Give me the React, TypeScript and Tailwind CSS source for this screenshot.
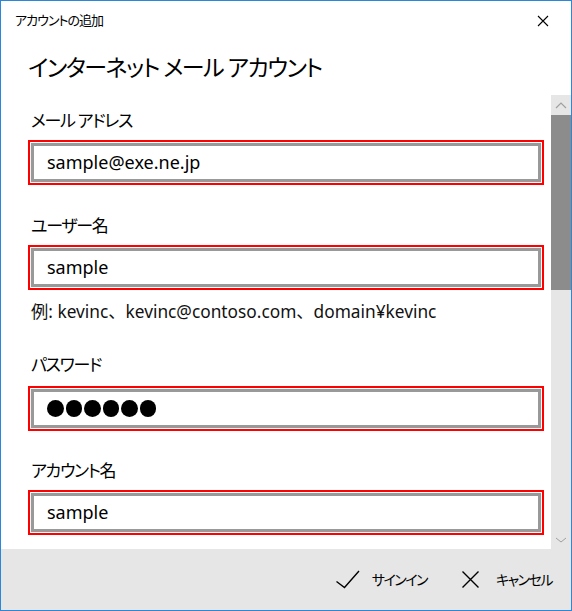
import React from "react";

const Field = ({ children }: { children: React.ReactNode }) => {
  return (
    <div className="h-[45px] border-2 border-[#ff0000] p-px">
      <div className="h-full border-[3px] border-[#999999] bg-white flex items-center pl-[13px] text-[18px] text-black">
        {children}
      </div>
    </div>
  );
};

const Label = ({ children, className }: { children: React.ReactNode; className?: string }) => {
  return (
    <div className={"h-[24px] leading-[24px] pl-[3px] text-[17px] tracking-[-1.3px] text-black " + (className || "")}>
      {children}
    </div>
  );
};

const Dot = () => <span className="w-[16.5px] h-[16.5px] rounded-full bg-black" />;

const App = () => {
  return (
    <div className="w-[572px] h-[611px] border border-[#2b88d8] bg-white flex flex-col font-['Noto_Sans','Noto_Sans_CJK_JP',sans-serif] [font-feature-settings:'palt'] overflow-hidden">
      {/* title bar */}
      <div className="h-[39px] flex items-center justify-between pl-[14px] pr-[22px] shrink-0">
        <span className="text-[13px] tracking-[-1px] text-black">アカウントの追加</span>
        <svg width="12" height="12" viewBox="0 0 12 12">
          <path d="M1 1 L11 11 M11 1 L1 11" stroke="#000" strokeWidth="1.1" fill="none" />
        </svg>
      </div>
      {/* heading */}
      <div className="h-[55px] shrink-0 pl-[27px] pt-[11px]">
        <h1 className="text-[23px] tracking-[-1.5px] leading-[32px] text-black">インターネット メール アカウント</h1>
      </div>
      {/* scroll area */}
      <div className="flex-1 flex min-h-0">
        <div className="flex-1 pl-[27px] pr-[7px] pt-[14px] flex flex-col">
          <Label>メール アドレス</Label>
          <div className="mt-[7px]">
            <Field>sample@exe.ne.jp</Field>
          </div>
          <Label className="mt-[29px]">ユーザー名</Label>
          <div className="mt-[7px]">
            <Field>sample</Field>
          </div>
          <div className="mt-[10px] h-[24px] leading-[24px] pl-[3px] text-[17.3px] text-[#111111] [font-feature-settings:normal]">
            例: kevinc、kevinc@contoso.com、domain¥kevinc
          </div>
          <Label className="mt-[29px]">パスワード</Label>
          <div className="mt-[9px]">
            <Field>
              <span className="flex gap-[2px]">
                <Dot />
                <Dot />
                <Dot />
                <Dot />
                <Dot />
                <Dot />
              </span>
            </Field>
          </div>
          <Label className="mt-[28px]">アカウント名</Label>
          <div className="mt-[7px]">
            <Field>sample</Field>
          </div>
        </div>
        {/* scrollbar */}
        <div className="w-[20px] flex flex-col bg-[#e6e6e6] shrink-0">
          <div className="h-[20px] flex items-center justify-center">
            <svg width="12" height="7" viewBox="0 0 12 7">
              <path d="M1 6 L6 1 L11 6" stroke="#a0a0a0" strokeWidth="1.2" fill="none" />
            </svg>
          </div>
          <div className="h-[175px] bg-[#8c8c8c]" />
          <div className="flex-1" />
          <div className="h-[20px] flex items-start justify-center pt-[8px]">
            <svg width="12" height="6" viewBox="0 0 12 6">
              <path d="M1 1 L6 5 L11 1" stroke="#a0a0a0" strokeWidth="1" fill="none" />
            </svg>
          </div>
        </div>
      </div>
      {/* footer */}
      <div className="h-[61px] shrink-0 bg-[#e6e6e6] flex items-center justify-end pr-[19px]">
        <button className="flex items-center">
          <svg width="24" height="19" viewBox="0 0 24 19">
            <path d="M0.5 11.5 L8.5 17.5 L23 1" stroke="#000" strokeWidth="1.4" fill="none" />
          </svg>
          <span className="ml-[12px] text-[14px] tracking-[-1.5px] text-black">サインイン</span>
        </button>
        <button className="flex items-center ml-[35px]">
          <svg width="17" height="17" viewBox="0 0 17 17">
            <path d="M0.5 0.5 L16.5 16.5 M16.5 0.5 L0.5 16.5" stroke="#000" strokeWidth="1.4" fill="none" />
          </svg>
          <span className="ml-[17px] text-[14px] tracking-[-1.5px] text-black">キャンセル</span>
        </button>
      </div>
    </div>
  );
};

export default App;
